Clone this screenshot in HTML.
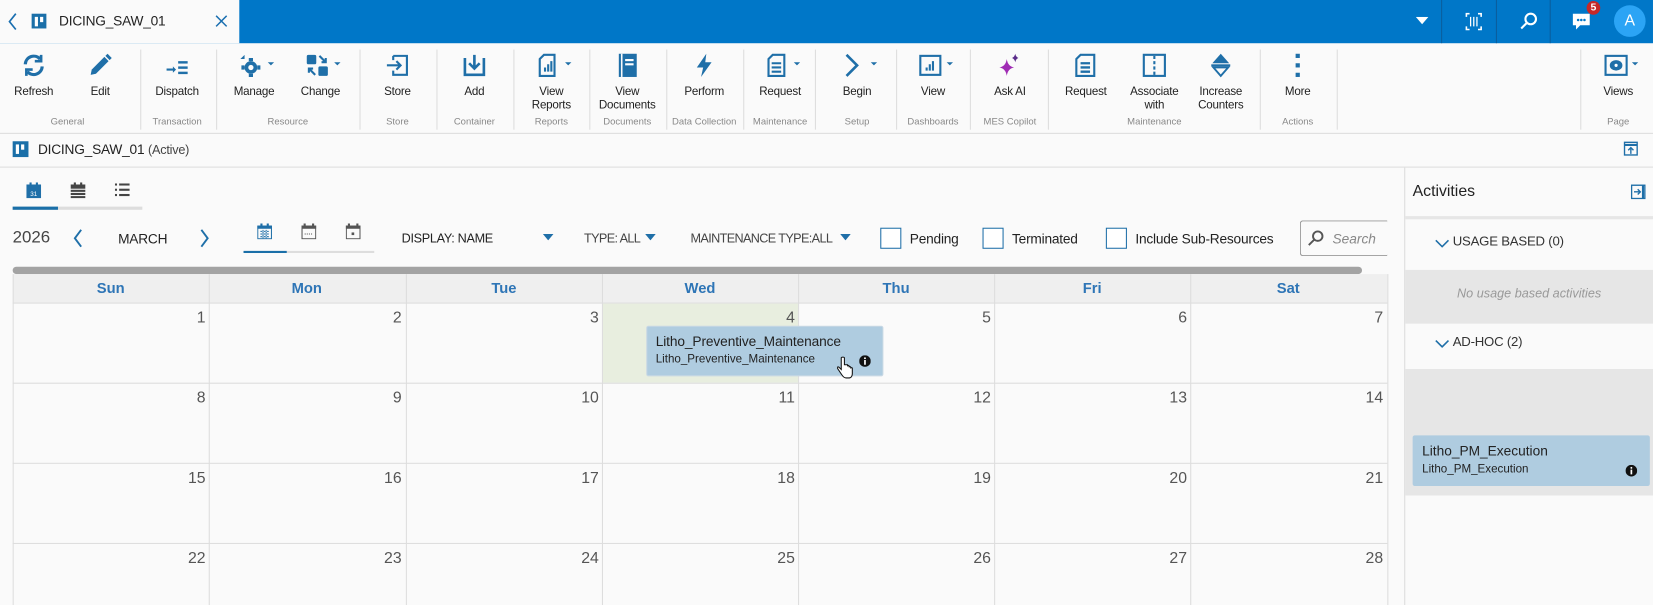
<!DOCTYPE html>
<html><head><meta charset="utf-8">
<style>
*{margin:0;padding:0;box-sizing:border-box}
html,body{width:1653px;height:605px;overflow:hidden;background:#fafafa;font-family:"Liberation Sans",sans-serif;color:#333}
#w{position:absolute;left:0;top:0;width:1568px;height:574px;transform:scale(1.0542);transform-origin:0 0;background:#fafafa}
.a{position:absolute}
.tb{position:absolute;top:0;width:60px;text-align:center}
.tb svg{position:absolute;top:9px;left:50%;margin-left:-12px}
.tb .l{position:absolute;top:40px;left:-10px;right:-10px;font-size:11px;line-height:13px;color:#222;letter-spacing:-0.2px}
.g{position:absolute;top:69px;font-size:9px;color:#888;text-align:center;width:100px}
.sep{position:absolute;top:6px;width:1px;height:76px;background:#ddd}
.dn{position:absolute;font-size:15px;color:#555;text-align:right;width:30px}
.hd{position:absolute;top:265px;font-size:14px;font-weight:bold;color:#2e75b6;text-align:center;width:186px}
.cb{position:absolute;top:216px;width:20px;height:20px;border:1.5px solid #1f6fa8;background:#fff}
.ct{position:absolute;top:219px;font-size:13px;color:#222;letter-spacing:-0.2px}
</style></head><body><div id="w">
<div class="a" style="left:0;top:0;width:1568px;height:41px;background:#0077c8"></div>
<div class="a" style="left:0;top:0;width:227px;height:41px;background:#fafafa"></div>
<svg class="a" style="left:7px;top:12px" width="10" height="17"><path d="M8 1L2 8.5 8 16" stroke="#1a6fb0" stroke-width="1.6" fill="none"/></svg>
<div class="a" style="left:30px;top:13px;width:14px;height:14px;background:#1a6fa8"></div>
<div class="a" style="left:33px;top:16px;width:3px;height:9px;background:#fff"></div>
<div class="a" style="left:38px;top:16px;width:3px;height:5px;background:#fff"></div>
<div class="a" style="left:56px;top:12px;font-size:13px;color:#222;letter-spacing:-0.2px">DICING_SAW_01</div>
<svg class="a" style="left:204px;top:14px" width="12" height="12"><path d="M1 1L11 11M11 1L1 11" stroke="#1a6fb0" stroke-width="1.4"/></svg>
<svg class="a" style="left:1343px;top:16px" width="12" height="8"><path d="M0 0H12L6 7z" fill="#fff"/></svg>
<div class="a" style="left:1367px;top:0;width:1px;height:41px;background:#0a5e9c"></div>
<div class="a" style="left:1419px;top:0;width:1px;height:41px;background:#0a5e9c"></div>
<div class="a" style="left:1470px;top:0;width:1px;height:41px;background:#0a5e9c"></div>
<svg class="a" style="left:1390px;top:12px" width="16" height="17" fill="none" stroke="#fff" stroke-width="1.5"><path d="M1 4V1H4M12 1H15V4M15 13V16H12M4 16H1V13"/><path d="M5 4V13M8 4V13M11 4V13" stroke-width="1.2"/></svg>
<svg class="a" style="left:1441px;top:11px" width="18" height="18" fill="none" stroke="#fff" stroke-width="2"><circle cx="11" cy="7" r="5"/><path d="M7 11L2 16"/></svg>
<svg class="a" style="left:1491px;top:12px" width="18" height="18"><path d="M1 1H17V12H8L4 16V12H1z" fill="#fff"/><circle cx="6" cy="7" r="1.2" fill="#0077c8"/><circle cx="9" cy="7" r="1.2" fill="#0077c8"/><circle cx="12" cy="7" r="1.2" fill="#0077c8"/></svg>
<div class="a" style="left:1505px;top:1px;width:13px;height:13px;border-radius:7px;background:#c62828;color:#fff;font-size:10px;text-align:center;line-height:13px;font-weight:bold">5</div>
<div class="a" style="left:1531px;top:5px;width:30px;height:30px;border-radius:15px;background:#2ba4f5;color:#fff;font-size:15px;text-align:center;line-height:30px">A</div>

<div class="a" style="left:0;top:41px;width:1568px;height:85px">
<div class="tb" style="left:2px"><svg width="24" height="24" viewBox="0 0 24 24" fill="none" stroke="#1f6fa8" stroke-width="3"><path d="M4 11A8 8 0 0 1 18 6"/><path d="M20 13A8 8 0 0 1 6 18"/><path d="M19 2V8H13" stroke-width="2.5"/><path d="M5 22V16H11" stroke-width="2.5"/></svg><div class="l">Refresh</div></div>
<div class="tb" style="left:65px"><svg width="24" height="24" viewBox="0 0 24 24"><path d="M3 21L4 16 16 4 20 8 8 20z" fill="#1f6fa8"/><path d="M17 3L19 1 23 5 21 7z" fill="#1f6fa8"/></svg><div class="l">Edit</div></div>
<div class="sep" style="left:133px"></div>
<div class="tb" style="left:138px"><svg width="24" height="24" viewBox="0 0 24 24" fill="#1f6fa8"><path d="M2 15H8V13L11 16 8 19V17H2z"/><rect x="13" y="8" width="9" height="2.3"/><rect x="13" y="13" width="9" height="2.3"/><rect x="13" y="18" width="9" height="2.3"/></svg><div class="l">Dispatch</div></div>
<div class="sep" style="left:205px"></div>
<div class="tb" style="left:211px"><svg width="34" height="24" viewBox="0 0 34 24" fill="#1f6fa8" style="margin-left:-14px"><circle cx="11" cy="14" r="6"/><circle cx="11" cy="14" r="2.5" fill="#fafafa"/><path d="M9 5h4v3H9zM9 20h4v3H9zM2 12h3v4H2zM17 12h3v4h-3z"/><path d="M1 6L5 2 5 6z"/><path d="M27 9H33L30 12z"/></svg><div class="l">Manage</div></div>
<div class="tb" style="left:274px"><svg width="34" height="24" viewBox="0 0 34 24" fill="#1f6fa8" style="margin-left:-14px"><rect x="1" y="2" width="9" height="9" rx="1.5"/><rect x="12" y="13" width="9" height="9" rx="1.5"/><path d="M13 3L19 9M19 5V9H15M9 21L3 15M3 19V15H7" stroke="#1f6fa8" stroke-width="2" fill="none"/><path d="M27 9H33L30 12z"/></svg><div class="l">Change</div></div>
<div class="sep" style="left:341px"></div>
<div class="tb" style="left:347px"><svg width="24" height="24" viewBox="0 0 24 24" fill="none" stroke="#1f6fa8" stroke-width="2"><path d="M8 3H21V21H8V17M8 7V3"/><path d="M2 12H15M11 8L15 12 11 16"/></svg><div class="l">Store</div></div>
<div class="sep" style="left:414px"></div>
<div class="tb" style="left:420px"><svg width="24" height="24" viewBox="0 0 24 24" fill="none" stroke="#1f6fa8" stroke-width="2.5"><path d="M3 5V21H21V5"/><path d="M12 2V15M7 10L12 15 17 10"/></svg><div class="l">Add</div></div>
<div class="sep" style="left:487px"></div>
<div class="tb" style="left:493px"><svg width="34" height="24" viewBox="0 0 34 24" fill="none" stroke="#1f6fa8" stroke-width="2" style="margin-left:-14px"><path d="M3 6L7 2H17V22H3z"/><path d="M8 18V14M11 18V11M14 18V8" stroke-width="2"/><path d="M27 9H33L30 12z" fill="#1f6fa8" stroke="none"/></svg><div class="l">View<br>Reports</div></div>
<div class="sep" style="left:559px"></div>
<div class="tb" style="left:565px"><svg width="24" height="24" viewBox="0 0 24 24"><rect x="4" y="1" width="17" height="22" fill="#1f6fa8"/><rect x="6" y="1" width="1.5" height="22" fill="#fafafa"/><rect x="10" y="6" width="8" height="2" fill="#fff"/><rect x="10" y="10" width="8" height="2" fill="#fff"/></svg><div class="l">View<br>Documents</div></div>
<div class="sep" style="left:632px"></div>
<div class="tb" style="left:638px"><svg width="24" height="24" viewBox="0 0 24 24"><path d="M14 1L5 14H11L9 23 19 9H13z" fill="#1f6fa8"/></svg><div class="l">Perform</div></div>
<div class="sep" style="left:705px"></div>
<div class="tb" style="left:710px"><svg width="34" height="24" viewBox="0 0 34 24" fill="none" stroke="#1f6fa8" stroke-width="2" style="margin-left:-14px"><path d="M3 6L7 2H18V22H3z"/><path d="M6 10H15M6 14H15M6 18H15" stroke-width="2"/><path d="M27 9H33L30 12z" fill="#1f6fa8" stroke="none"/></svg><div class="l">Request</div></div>
<div class="sep" style="left:773px"></div>
<div class="tb" style="left:783px"><svg width="34" height="24" viewBox="0 0 34 24" fill="none" stroke="#1f6fa8" stroke-width="2.5" style="margin-left:-14px"><path d="M4 2L14 12 4 22"/><path d="M27 9H33L30 12z" fill="#1f6fa8" stroke="none"/></svg><div class="l">Begin</div></div>
<div class="sep" style="left:850px"></div>
<div class="tb" style="left:855px"><svg width="34" height="24" viewBox="0 0 34 24" fill="none" stroke="#1f6fa8" stroke-width="2" style="margin-left:-14px"><rect x="2" y="3" width="19" height="18"/><path d="M8 17V14M11 17V11M14 17V8" stroke-width="2"/><path d="M27 9H33L30 12z" fill="#1f6fa8" stroke="none"/></svg><div class="l">View</div></div>
<div class="sep" style="left:920px"></div>
<div class="tb" style="left:928px"><svg width="24" height="24" viewBox="0 0 24 24"><path d="M9 6Q10 13 16 14 10 15 9 22 8 15 2 14 8 13 9 6z" fill="#a02cb4"/><path d="M17 1Q17.5 4 20 5 17.5 6 17 9 16.5 6 14 5 16.5 4 17 1z" fill="#5a2c8a"/></svg><div class="l">Ask AI</div></div>
<div class="sep" style="left:994px"></div>
<div class="tb" style="left:1000px"><svg width="24" height="24" viewBox="0 0 24 24" fill="none" stroke="#1f6fa8" stroke-width="2"><path d="M3 6L7 2H20V22H3z"/><path d="M7 10H16M7 14H16M7 18H16" stroke-width="2.2"/></svg><div class="l">Request</div></div>
<div class="tb" style="left:1065px"><svg width="24" height="24" viewBox="0 0 24 24" fill="none" stroke="#1f6fa8" stroke-width="2"><rect x="2" y="2" width="20" height="20"/><path d="M12 3V21" stroke-dasharray="3 2"/></svg><div class="l">Associate<br>with</div></div>
<div class="tb" style="left:1128px"><svg width="24" height="24" viewBox="0 0 24 24"><path d="M12 1L20 10H4z" fill="#1f6fa8"/><rect x="3" y="11" width="18" height="2" fill="#1f6fa8"/><path d="M5 14H19L12 22z" fill="none" stroke="#1f6fa8" stroke-width="1.8"/></svg><div class="l">Increase<br>Counters</div></div>
<div class="sep" style="left:1195px"></div>
<div class="tb" style="left:1201px"><svg width="24" height="24" viewBox="0 0 24 24" fill="#1f6fa8"><rect x="10" y="1" width="4" height="4"/><rect x="10" y="10" width="4" height="4"/><rect x="10" y="19" width="4" height="4"/></svg><div class="l">More</div></div>
<div class="sep" style="left:1268px"></div>
<div class="sep" style="left:1499px"></div>
<div class="tb" style="left:1505px"><svg width="34" height="24" viewBox="0 0 34 24" fill="none" stroke="#1f6fa8" stroke-width="2" style="margin-left:-14px"><rect x="2" y="3" width="20" height="18"/><ellipse cx="12" cy="12" rx="5" ry="4" fill="#1f6fa8"/><circle cx="12" cy="12" r="1.5" fill="#fff" stroke="none"/><path d="M27 9H33L30 12z" fill="#1f6fa8" stroke="none"/></svg><div class="l">Views</div></div>
<div class="g" style="left:14px">General</div>
<div class="g" style="left:118px">Transaction</div>
<div class="g" style="left:223px">Resource</div>
<div class="g" style="left:327px">Store</div>
<div class="g" style="left:400px">Container</div>
<div class="g" style="left:473px">Reports</div>
<div class="g" style="left:545px">Documents</div>
<div class="g" style="left:618px">Data Collection</div>
<div class="g" style="left:690px">Maintenance</div>
<div class="g" style="left:763px">Setup</div>
<div class="g" style="left:835px">Dashboards</div>
<div class="g" style="left:908px">MES Copilot</div>
<div class="g" style="left:1045px">Maintenance</div>
<div class="g" style="left:1181px">Actions</div>
<div class="g" style="left:1485px">Page</div>
</div>
<div class="a" style="left:0;top:126px;width:1568px;height:1px;background:#ddd"></div>

<div class="a" style="left:12px;top:134px;width:15px;height:15px;background:#1a6fa8"></div>
<div class="a" style="left:15px;top:137px;width:3px;height:9px;background:#fff"></div>
<div class="a" style="left:20px;top:137px;width:3px;height:5px;background:#fff"></div>
<div class="a" style="left:36px;top:134px;font-size:13px;color:#222;letter-spacing:-0.2px">DICING_SAW_01 <span style="font-size:12px;color:#444">(Active)</span></div>
<svg class="a" style="left:1540px;top:134px" width="14" height="14" fill="none" stroke="#1f6fa8" stroke-width="1.3"><rect x="1" y="1" width="12" height="12"/><path d="M1 3.5H13" stroke-width="2"/><path d="M7 12V6M4.5 8.5L7 6 9.5 8.5"/></svg>
<div class="a" style="left:0;top:158px;width:1568px;height:1px;background:#ddd"></div>

<svg class="a" style="left:25px;top:173px" width="14" height="15"><rect x="0" y="2" width="14" height="13" fill="#1f6fa8"/><rect x="3" y="0" width="2" height="3" fill="#1f6fa8"/><rect x="9" y="0" width="2" height="3" fill="#1f6fa8"/><text x="7" y="13" font-size="6" fill="#fff" text-anchor="middle" font-family="Liberation Sans">31</text></svg>
<svg class="a" style="left:67px;top:173px" width="14" height="15" fill="#444"><rect x="0" y="2" width="14" height="4"/><rect x="3" y="0" width="2" height="3"/><rect x="9" y="0" width="2" height="3"/><rect x="0" y="7" width="14" height="2"/><rect x="0" y="10" width="14" height="2"/><rect x="0" y="13" width="14" height="2"/></svg>
<svg class="a" style="left:109px;top:174px" width="14" height="13" fill="#444"><rect x="0" y="0" width="2" height="2"/><rect x="4" y="0" width="10" height="2"/><rect x="0" y="5" width="2" height="2"/><rect x="4" y="5" width="10" height="2"/><rect x="0" y="10" width="2" height="2"/><rect x="4" y="10" width="10" height="2"/></svg>
<div class="a" style="left:12px;top:196px;width:123px;height:3px;background:#ddd"></div>
<div class="a" style="left:12px;top:196px;width:43px;height:3px;background:#1a6fa8"></div>

<div class="a" style="left:12px;top:217px;font-size:16px;color:#444">2026</div>
<svg class="a" style="left:69px;top:217px" width="10" height="18"><path d="M8 1L2 9 8 17" stroke="#1f6fa8" stroke-width="1.8" fill="none"/></svg>
<div class="a" style="left:112px;top:219px;font-size:13px;color:#222;letter-spacing:-0.2px">MARCH</div>
<svg class="a" style="left:189px;top:217px" width="10" height="18"><path d="M2 1L8 9 2 17" stroke="#1f6fa8" stroke-width="1.8" fill="none"/></svg>
<svg class="a" style="left:244px;top:212px" width="14" height="15"><rect x="0.5" y="2.5" width="13" height="12" fill="none" stroke="#1f6fa8"/><rect x="0" y="2" width="14" height="3" fill="#1f6fa8"/><rect x="3" y="0" width="2" height="3" fill="#1f6fa8"/><rect x="9" y="0" width="2" height="3" fill="#1f6fa8"/><path d="M3 7h8v1H3zM3 9.5h8v1H3zM3 12h8v1H3zM5 6v8h1V6zM8 6v8h1V6z" fill="#1f6fa8"/></svg>
<svg class="a" style="left:286px;top:212px" width="14" height="15" fill="none" stroke="#555"><rect x="0.5" y="2.5" width="13" height="12"/><rect x="0.5" y="2.5" width="13" height="2" fill="#555"/><path d="M3 0v3M11 0v3" stroke-width="2"/><path d="M3 10h8" stroke-dasharray="1 1"/></svg>
<svg class="a" style="left:328px;top:212px" width="14" height="15" fill="none" stroke="#555"><rect x="0.5" y="2.5" width="13" height="12"/><rect x="0.5" y="2.5" width="13" height="2" fill="#555"/><path d="M3 0v3M11 0v3" stroke-width="2"/><rect x="6" y="9" width="1.5" height="1.5" fill="#555"/></svg>
<div class="a" style="left:231px;top:238px;width:124px;height:2px;background:#ddd"></div>
<div class="a" style="left:231px;top:238px;width:41px;height:2px;background:#1a6fa8"></div>
<div class="a" style="left:381px;top:219px;font-size:12px;color:#222;letter-spacing:-0.3px">DISPLAY: NAME</div>
<svg class="a" style="left:515px;top:222px" width="10" height="6"><path d="M0 0H10L5 6z" fill="#1f6fa8"/></svg>
<div class="a" style="left:554px;top:219px;font-size:12px;color:#444;letter-spacing:-0.6px">TYPE: ALL</div>
<svg class="a" style="left:612px;top:222px" width="10" height="6"><path d="M0 0H10L5 6z" fill="#1f6fa8"/></svg>
<div class="a" style="left:655px;top:219px;font-size:12px;color:#444;letter-spacing:-0.6px">MAINTENANCE TYPE:ALL</div>
<svg class="a" style="left:797px;top:222px" width="10" height="6"><path d="M0 0H10L5 6z" fill="#1f6fa8"/></svg>
<div class="cb" style="left:835px"></div><div class="ct" style="left:863px">Pending</div>
<div class="cb" style="left:932px"></div><div class="ct" style="left:960px">Terminated</div>
<div class="cb" style="left:1049px"></div><div class="ct" style="left:1077px">Include Sub-Resources</div>
<div class="a" style="left:1233px;top:209px;width:83px;height:34px;border:1px solid #999;border-radius:3px 0 0 3px;background:#fafafa;border-right:none"></div>
<svg class="a" style="left:1240px;top:218px" width="16" height="16" fill="none" stroke="#555" stroke-width="1.8"><circle cx="10" cy="6" r="4.5"/><path d="M7 9L1.5 14.5"/></svg>
<div class="a" style="left:1264px;top:219px;font-size:13px;font-style:italic;color:#888">Search</div>

<div class="a" style="left:12px;top:253px;width:1280px;height:7px;border-radius:4px;background:#a3a3a3"></div>
<div class="a" style="left:12px;top:260px;width:1304px;height:28px;background:#efefef;border-bottom:1px solid #ddd"></div>
<div class="a" style="left:571px;top:288px;width:186px;height:75px;background:#e8eedf"></div>
<div class="hd" style="left:12px">Sun</div><div class="hd" style="left:198px">Mon</div><div class="hd" style="left:385px">Tue</div><div class="hd" style="left:571px">Wed</div><div class="hd" style="left:757px">Thu</div><div class="hd" style="left:943px">Fri</div><div class="hd" style="left:1129px">Sat</div>
<div class="a" style="left:12px;top:260px;width:1px;height:314px;background:#ddd"></div>
<div class="a" style="left:198px;top:260px;width:1px;height:314px;background:#ddd"></div>
<div class="a" style="left:385px;top:260px;width:1px;height:314px;background:#ddd"></div>
<div class="a" style="left:571px;top:260px;width:1px;height:314px;background:#ddd"></div>
<div class="a" style="left:757px;top:260px;width:1px;height:314px;background:#ddd"></div>
<div class="a" style="left:943px;top:260px;width:1px;height:314px;background:#ddd"></div>
<div class="a" style="left:1129px;top:260px;width:1px;height:314px;background:#ddd"></div>
<div class="a" style="left:1316px;top:260px;width:1px;height:314px;background:#ddd"></div>
<div class="a" style="left:12px;top:363px;width:1304px;height:1px;background:#ddd"></div>
<div class="a" style="left:12px;top:439px;width:1304px;height:1px;background:#ddd"></div>
<div class="a" style="left:12px;top:515px;width:1304px;height:1px;background:#ddd"></div>

<div class="dn" style="left:165px;top:293px">1</div><div class="dn" style="left:351px;top:293px">2</div><div class="dn" style="left:538px;top:293px">3</div><div class="dn" style="left:724px;top:293px">4</div><div class="dn" style="left:910px;top:293px">5</div><div class="dn" style="left:1096px;top:293px">6</div><div class="dn" style="left:1282px;top:293px">7</div>
<div class="dn" style="left:165px;top:369px">8</div><div class="dn" style="left:351px;top:369px">9</div><div class="dn" style="left:538px;top:369px">10</div><div class="dn" style="left:724px;top:369px">11</div><div class="dn" style="left:910px;top:369px">12</div><div class="dn" style="left:1096px;top:369px">13</div><div class="dn" style="left:1282px;top:369px">14</div>
<div class="dn" style="left:165px;top:445px">15</div><div class="dn" style="left:351px;top:445px">16</div><div class="dn" style="left:538px;top:445px">17</div><div class="dn" style="left:724px;top:445px">18</div><div class="dn" style="left:910px;top:445px">19</div><div class="dn" style="left:1096px;top:445px">20</div><div class="dn" style="left:1282px;top:445px">21</div>
<div class="dn" style="left:165px;top:521px">22</div><div class="dn" style="left:351px;top:521px">23</div><div class="dn" style="left:538px;top:521px">24</div><div class="dn" style="left:724px;top:521px">25</div><div class="dn" style="left:910px;top:521px">26</div><div class="dn" style="left:1096px;top:521px">27</div><div class="dn" style="left:1282px;top:521px">28</div>

<div class="a" style="left:613px;top:309px;width:225px;height:48px;background:#afcce0;border:1px solid #c8d8e4;border-radius:2px"></div>
<div class="a" style="left:622px;top:316px;font-size:13px;color:#222;letter-spacing:-0.1px">Litho_Preventive_Maintenance</div>
<div class="a" style="left:622px;top:335px;font-size:11px;color:#222">Litho_Preventive_Maintenance</div>
<svg class="a" style="left:815px;top:337px" width="11" height="11"><circle cx="5.5" cy="5.5" r="5.5" fill="#111"/><rect x="4.7" y="4.5" width="1.6" height="4.5" fill="#fff"/><circle cx="5.5" cy="2.8" r="0.9" fill="#fff"/></svg>
<svg class="a" style="left:794px;top:338px" width="16" height="22"><path d="M4 1.5v11l-2-2c-1-1-2.5 0-1.5 1l4 6c1 1.5 2 3 4 3h3c2 0 3-2 3-4v-5c0-1-1.5-1-1.5 0v-1c0-1-1.5-1-1.5 0v-1c0-1-1.5-1-1.5 0V8H7V1.5C7 0.5 4 0.5 4 1.5z" fill="#fff" stroke="#111" stroke-width="1"/></svg>

<div class="a" style="left:1332px;top:159px;width:1px;height:415px;background:#ddd"></div>
<div class="a" style="left:1340px;top:173px;font-size:15px;color:#222">Activities</div>
<svg class="a" style="left:1547px;top:175px" width="14" height="14" fill="none" stroke="#1f6fa8" stroke-width="1.3"><rect x="0.7" y="0.7" width="12.6" height="12.6"/><path d="M11.5 1V13" stroke-width="2"/><path d="M3 7H9M6.5 4.5L9 7 6.5 9.5"/></svg>
<div class="a" style="left:1333px;top:205px;width:235px;height:3px;background:#e6e6e6"></div>
<svg class="a" style="left:1361px;top:227px" width="14" height="8"><path d="M1 1L7 7 13 1" stroke="#1f6fa8" stroke-width="1.5" fill="none"/></svg>
<div class="a" style="left:1378px;top:222px;font-size:12.5px;color:#333;letter-spacing:-0.2px">USAGE BASED (0)</div>
<div class="a" style="left:1333px;top:256px;width:235px;height:51px;background:#e6e6e6"></div>
<div class="a" style="left:1333px;top:271px;width:235px;text-align:center;font-size:12px;font-style:italic;color:#999">No usage based activities</div>
<svg class="a" style="left:1361px;top:322px" width="14" height="8"><path d="M1 1L7 7 13 1" stroke="#1f6fa8" stroke-width="1.5" fill="none"/></svg>
<div class="a" style="left:1378px;top:317px;font-size:12.5px;color:#333;letter-spacing:-0.2px">AD-HOC (2)</div>
<div class="a" style="left:1333px;top:350px;width:235px;height:120px;background:#e6e6e6"></div>
<div class="a" style="left:1340px;top:413px;width:225px;height:48px;background:#afcce0;border-radius:2px"></div>
<div class="a" style="left:1349px;top:420px;font-size:13px;color:#222">Litho_PM_Execution</div>
<div class="a" style="left:1349px;top:439px;font-size:11px;color:#222">Litho_PM_Execution</div>
<svg class="a" style="left:1542px;top:441px" width="11" height="11"><circle cx="5.5" cy="5.5" r="5.5" fill="#111"/><rect x="4.7" y="4.5" width="1.6" height="4.5" fill="#fff"/><circle cx="5.5" cy="2.8" r="0.9" fill="#fff"/></svg>
</div></body></html>
